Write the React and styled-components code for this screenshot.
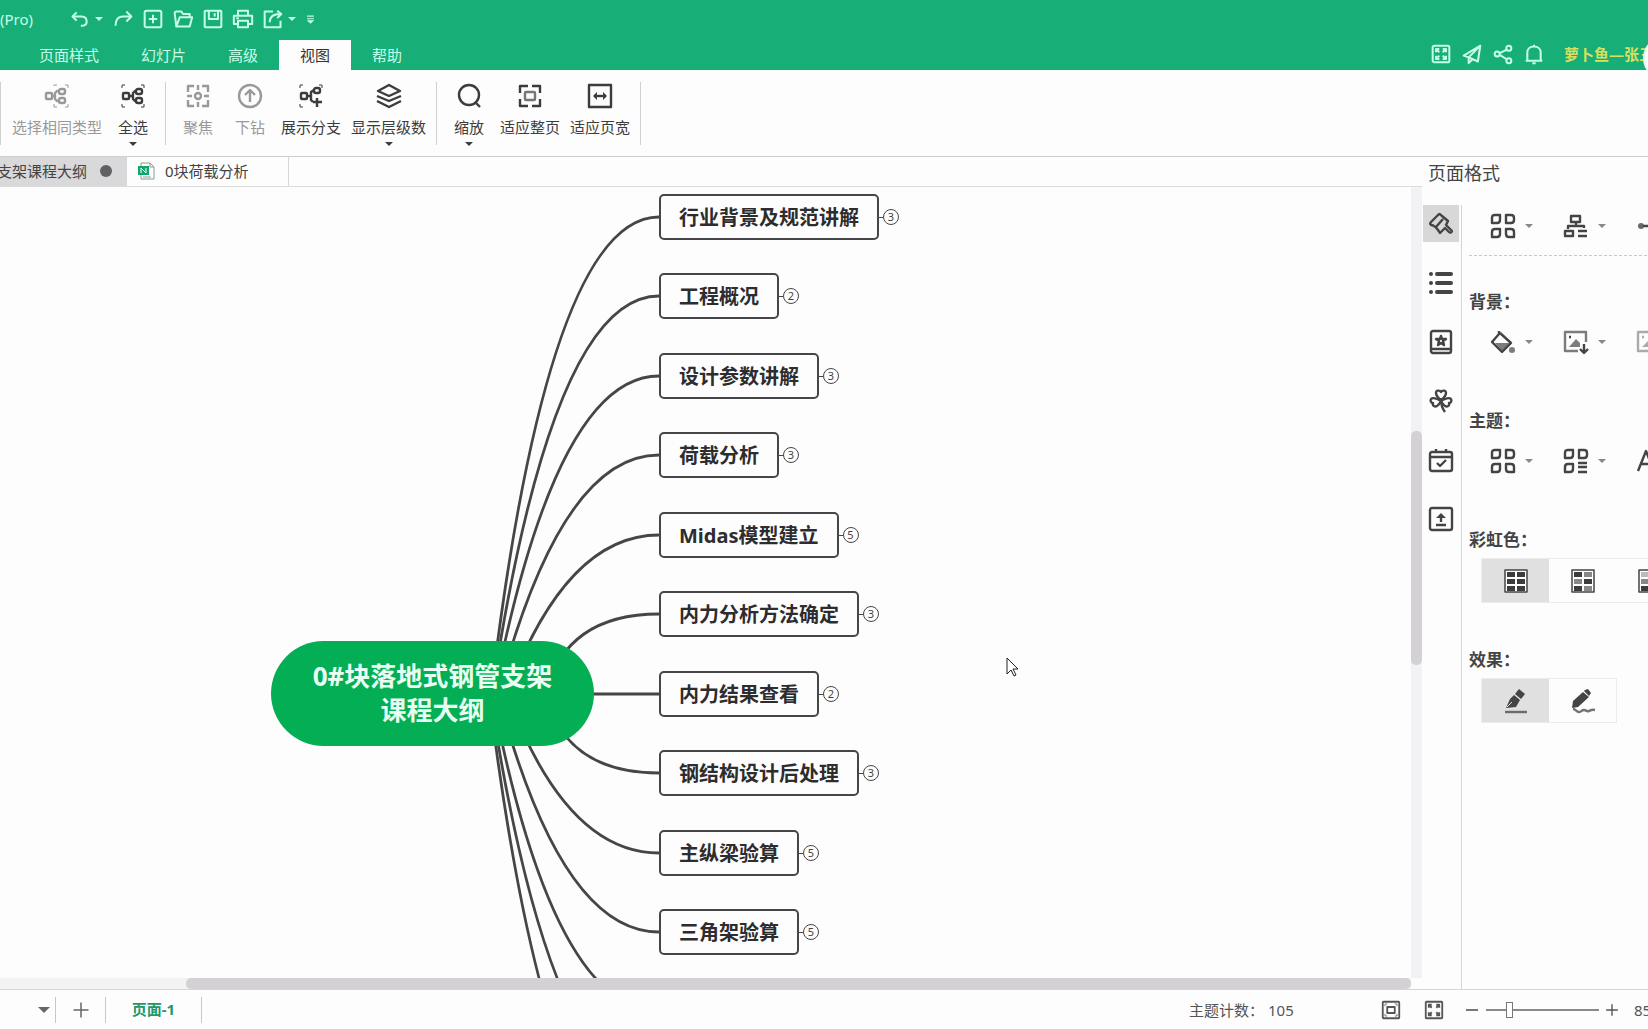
import { useState } from "react";
import styled, { createGlobalStyle, css } from "styled-components";

const GlobalStyle = createGlobalStyle`
  * {
    box-sizing: border-box;
  }

  body {
    margin: 0;
    overflow: hidden;
    font-family: "Noto Sans", "Noto Sans CJK SC", sans-serif;
    font-size: 15px;
    line-height: 20px;
    color: #444;
    background: #fdfdfd;
  }

  button {
    padding: 0;
    border: 0;
    background: none;
    color: inherit;
    font: inherit;
    cursor: pointer;
  }
`;

const icons = {
  undo: (
    <>
      <path d="M8 4 3 9l5 5" />
      <path d="M3 9h11c4 0 6 2 6 6s-2 5-5 5h-2" />
    </>
  ),
  redo: (
    <>
      <path d="m16 3 6 6-6 6" />
      <path d="M21 9h-9c-6 0-9 4-9 11" />
    </>
  ),
  newFile: (
    <>
      <rect x="2" y="2" width="20" height="20" rx="2" />
      <path d="M12 7v10M7 12h10" />
    </>
  ),
  folder: (
    <>
      <path d="M4 21 2 5c0-1 1-2 2-2h6l2 3h8v4" />
      <path d="M4 21h16l3-11H8L4 21Z" />
    </>
  ),
  save: (
    <>
      <rect x="2" y="2" width="20" height="20" rx="1" />
      <path d="M7 2v10h11V2M14 5v4" />
    </>
  ),
  print: (
    <>
      <path d="M6 7V2h12v5M6 18H1V8h22v10h-5" />
      <path d="M6 14h12v8H6zM4 11h3" />
    </>
  ),
  exportFile: (
    <>
      <path d="M12 3H2v19h19v-8" />
      <path d="M8 16c0-6 4-10 13-10M17 2l5 4-5 5" />
    </>
  ),
  more: (
    <>
      <path d="M3 3h18M3 10h18" strokeWidth="3" />
      <path d="M2 14h20l-10 9z" fill="currentColor" stroke="none" />
    </>
  ),
  fullscreen: (
    <>
      <rect x="2" y="2" width="20" height="20" rx="2" />
      <path d="M6 10V6h4M14 6h4v4M18 14v4h-4M10 18H6v-4M6 6l4 4M18 6l-4 4M18 18l-4-4M6 18l4-4" />
    </>
  ),
  plane: <path d="M22 2 2 14l6 2 11 5 3-19ZM22 2 8 16v7l5-5" />,
  share: (
    <>
      <circle cx="5" cy="12" r="3" />
      <circle cx="19" cy="5" r="3" />
      <circle cx="19" cy="20" r="3" />
      <path d="m8 11 8-4M8 13l8 5" />
    </>
  ),
  bell: <path d="M4 20V10c0-4 3-7 8-7s8 3 8 7v10M2 20h20M12 1v2M10 23h4" />,
  sameType: (
    <>
      <rect x="1" y="9" width="6" height="6" rx="1" />
      <rect x="14" y="5" width="6" height="5" rx="2" />
      <rect x="14" y="14" width="6" height="5" rx="2" />
      <path d="M7 12h3M14 7h-2l-2 2v6l2 2h2" />
      <path d="M9 2V1h3M20 1h3v3M23 20v3h-3M12 23H9v-3" strokeWidth="1" />
    </>
  ),
  selectAll: (
    <>
      <rect x="2" y="9" width="6" height="6" rx="1" />
      <rect x="15" y="5" width="6" height="5" rx="2" />
      <rect x="15" y="14" width="6" height="5" rx="2" />
      <path d="M8 12h4M15 7h-1l-2 2v6l2 2h1" />
      <path d="M1 4V1h3M20 1h3v3M23 20v3h-3M4 23H1v-3" strokeWidth="1" />
    </>
  ),
  focus: (
    <>
      <circle cx="12" cy="12" r="3" />
      <path d="M2 8V2h6M16 2h6v6M22 16v6h-6M8 22H2v-6M12 1v5M12 18v5M1 12h5M18 12h5" />
    </>
  ),
  drill: (
    <>
      <circle cx="12" cy="12" r="11" />
      <path d="M12 18V7M7 11l5-5 5 5" />
    </>
  ),
  branch: (
    <>
      <rect x="2" y="9" width="6" height="6" rx="1" />
      <rect x="15" y="4" width="6" height="5" rx="2" />
      <path d="M8 12h4M15 6l-3 2v8l2 2M18 14v9M14 18h9" />
      <path d="M1 4V1h3M20 1h3v3M4 23H1v-3" strokeWidth="1" />
    </>
  ),
  layers: <path d="m12 1 11 6-11 5L1 7l11-6ZM0 12l12 5 12-5M0 17l12 6 12-6" />,
  zoom: (
    <>
      <circle cx="12" cy="11" r="10" />
      <path d="m18 18 5 5" />
    </>
  ),
  fitPage: (
    <>
      <path d="M2 9V2h8M14 2h8v7M22 15v7h-8M10 22H2v-7" />
      <rect x="7" y="8" width="10" height="8" rx="1" opacity=".7" />
    </>
  ),
  fitWidth: (
    <>
      <rect x="1" y="1" width="22" height="22" />
      <path d="M6 12h12" />
      <path d="m9 8-4 4 4 4ZM15 8l4 4-4 4Z" fill="currentColor" strokeWidth="0" />
    </>
  ),
  brush: (
    <>
      <path d="M10 2 2 10c-1 1-1 2 0 3 3 0 6 3 9 8l5-5 4 4c2 2 4-1 2-2l-5-5 2-4L13 4c-1-1-2-2-3-2Z" />
      <path d="m14 7-7 8" />
    </>
  ),
  list: (
    <>
      <path d="M8 3h14M8 12h14M8 21h14" strokeWidth="4" strokeLinecap="round" />
      <path d="M2 3h0M2 12h0M2 21h0" strokeWidth="4" strokeLinecap="round" />
    </>
  ),
  book: (
    <>
      <rect x="2" y="1" width="20" height="22" rx="2" />
      <path d="M2 19h20M12 6l1 3h4l-3 2 1 4-3-2-3 2 1-4-3-2h4z" />
    </>
  ),
  clover: (
    <>
      <path d="M12 11C8 8 7 6 7 4c0-3 4-3 5-1 1-2 5-2 5 1 0 2-1 4-5 7Z" />
      <path d="M12 12C7 9 4 8 2 10c-1 2 0 4 2 4-1 3 2 4 4 3 2-1 3-3 4-5Z" />
      <path d="M12 12c5-3 8-4 10-2 1 2 0 4-2 4 1 3-2 4-4 3-2-1-3-3-4-5Z" />
      <path d="M12 11c0 4 1 8 4 12" />
    </>
  ),
  calendar: (
    <>
      <rect x="1" y="4" width="22" height="19" rx="2" />
      <path d="M1 9h22M7 1v4M17 1v4M8 15l3 3 6-6" />
    </>
  ),
  upload: (
    <>
      <rect x="1" y="1" width="22" height="22" rx="2" />
      <path d="M12 15V9M7 18h10" />
      <path d="M7 11h10l-5-5z" fill="currentColor" stroke="none" />
    </>
  ),
  blocks: (
    <>
      <path d="M1 4q0-3 3-3h5v5q0 3-3 3H1ZM15 1h5q3 0 3 3v2q0 3-3 3h-5Z" />
      <path d="M4 15h5v5q0 3-3 3H1v-5q0-3 3-3ZM15 15h5q3 0 3 3v5h-5q-3 0-3-3Z" />
    </>
  ),
  structure: (
    <>
      <rect x="7" y="2" width="9" height="6" />
      <path d="M12 8v4M4 15v-3h16v2" />
      <rect x="1" y="17" width="8" height="5" />
      <path d="M14 17h9M14 22h9" />
    </>
  ),
  connector: (
    <>
      <circle cx="4" cy="12" r="3" fill="currentColor" stroke="none" opacity=".8" />
      <path d="M6 12h16M13 7v10" />
    </>
  ),
  fill: (
    <>
      <path d="M8 1v3L1 12l10 10 9-9L9 3" />
      <path d="M4 13h15l-8 8z" fill="currentColor" stroke="none" opacity=".7" />
      <circle cx="21" cy="20" r="3" fill="currentColor" stroke="none" opacity=".7" />
    </>
  ),
  image: (
    <>
      <path d="M14 21H1V2h21v10" opacity=".7" />
      <path d="M5 17 12 9l4 4v4z" fill="currentColor" stroke="none" opacity=".7" />
      <path d="M5 7h2" />
      <path d="M20 14v9M16 19l4 4 4-4" />
    </>
  ),
  watermark: (
    <>
      <path d="M22 21H1V2h21" />
      <path d="m5 17 8-8 5 8z" fill="currentColor" stroke="none" />
      <path d="M5 7h2" />
    </>
  ),
  themes: (
    <>
      <path d="M1 4q0-3 3-3h5v5q0 3-3 3H1ZM15 1h5q3 0 3 3v2q0 3-3 3h-5Z" />
      <path d="M4 15h5v5q0 3-3 3H1v-5q0-3 3-3ZM14 14h9M14 18h9M14 23h9" />
    </>
  ),
  letter: <path d="m1 22 8-20 8 20M4 15h10" />,
  fitWindow: (
    <>
      <rect x="1" y="1" width="22" height="22" rx="1" />
      <rect x="7" y="8" width="10" height="8" />
      <path d="M4 7V4h3M17 4h3v3M20 17v3h-3M7 20H4v-3" strokeWidth="1" />
    </>
  ),
  expand: (
    <>
      <rect x="1" y="1" width="22" height="22" rx="1" />
      <path d="M5 9V5h4M15 5h4v4M19 15v4h-4M9 19H5v-4M5 5l4 4M19 5l-4 4M19 19l-4-4M5 19l4-4" />
    </>
  ),
  minus: <path d="M3 12h18" />,
  plus: <path d="M12 2v20M2 12h20" />,
  pen: (
    <>
      <path d="m15 0 6 5-4 5-6-5Z" fill="currentColor" stroke="none" />
      <path d="m10 6 6 5-4 7-10 1 4-9Z" fill="currentColor" stroke="none" />
      <path d="m3 18 5-5" stroke="#e0e0e1" strokeWidth="1" />
      <path d="M1 23h22" opacity=".75" />
    </>
  ),
  pencil: (
    <>
      <path d="m14 1 3-1 3 4-2 3-5-5ZM12 3l6 5L7 18l-6 1 1-7Z" fill="currentColor" stroke="none" />
      <path d="M2 20c3 0 3 3 6 3s2-2 5-2 2 2 5 1 2-2 6-1" opacity=".75" />
    </>
  ),
};

function Icon({ name, size = 24, weight = 2.4 }) {
  return (
    <Glyph viewBox="0 0 24 24" width={size} height={size} strokeWidth={weight} aria-hidden="true">
      {icons[name]}
    </Glyph>
  );
}

// three rows of two colour cells, 1 = dark, 2 = mid, 3 = light
function PaletteIcon({ cells }) {
  const shades = { 1: "#3c3c3c", 2: "#888", 3: "#bbb" };
  return (
    <Glyph viewBox="0 0 24 24" width={24} height={24} aria-hidden="true">
      <rect x="1" y="1" width="22" height="22" strokeWidth="1.5" fill="#fff" />
      {cells.map((cell, i) => (
        <rect
          key={i}
          x={i % 2 ? 13 : 3}
          y={3 + Math.floor(i / 2) * 7}
          width="8"
          height="5"
          fill={shades[cell]}
          stroke="none"
        />
      ))}
    </Glyph>
  );
}

function FileIcon() {
  return (
    <Glyph viewBox="0 0 18 18" width={18} height={18} aria-hidden="true">
      <path d="M3 1h9l4 4v12H3z" fill="#fff" stroke="#8a9a94" />
      <path d="M12 1v4h4M5 15h8" stroke="#8a9a94" />
      <rect x="0" y="4" width="11" height="9" fill="#14a56c" stroke="none" />
      <path d="M3 11V6l5 5V6" stroke="#fff" strokeWidth="1" />
    </Glyph>
  );
}

const tabs = ["页面样式", "幻灯片", "高级", "视图", "帮助"];

const ribbonGroups = [
  [
    { icon: "sameType", label: "选择相同类型", disabled: true },
    { icon: "selectAll", label: "全选", menu: true },
  ],
  [
    { icon: "focus", label: "聚焦", disabled: true },
    { icon: "drill", label: "下钻", disabled: true },
    { icon: "branch", label: "展示分支" },
    { icon: "layers", label: "显示层级数", menu: true },
  ],
  [
    { icon: "zoom", label: "缩放", menu: true },
    { icon: "fitPage", label: "适应整页" },
    { icon: "fitWidth", label: "适应页宽" },
  ],
];

const sideTools = [
  { icon: "brush", label: "页面格式" },
  { icon: "list", label: "大纲" },
  { icon: "book", label: "图标" },
  { icon: "clover", label: "剪贴画" },
  { icon: "calendar", label: "任务" },
  { icon: "upload", label: "导出" },
];

// bend = x of the curve's control point, start = x where it leaves the root
const topics = [
  { label: "行业背景及规范讲解", count: 3, y: 30, start: 491, bend: 548 },
  { label: "工程概况", count: 2, y: 109, start: 492, bend: 552 },
  { label: "设计参数讲解", count: 3, y: 189, start: 494, bend: 556 },
  { label: "荷载分析", count: 3, y: 268, start: 498, bend: 561 },
  { label: "Midas模型建立", count: 5, y: 348, start: 507, bend: 566 },
  { label: "内力分析方法确定", count: 3, y: 427, start: 545, bend: 566 },
  { label: "内力结果查看", count: 2, y: 507, start: 541, bend: 567 },
  { label: "钢结构设计后处理", count: 3, y: 586, start: 545, bend: 566 },
  { label: "主纵梁验算", count: 5, y: 666, start: 507, bend: 566 },
  { label: "三角架验算", count: 5, y: 745, start: 498, bend: 561 },
];

const hiddenBranches = [
  { y: 824, start: 492, bend: 553 },
  { y: 904, start: 490, bend: 551 },
  { y: 983, start: 489, bend: 548 },
];

const ROOT_Y = 507;
const TOPIC_X = 659;

function MindMap() {
  return (
    <Canvas>
      <Branches>
        {[...topics, ...hiddenBranches].map(({ y, start, bend }) => (
          <path key={y} d={`M${start} ${ROOT_Y}Q${bend} ${y} ${TOPIC_X} ${y}`} />
        ))}
      </Branches>
      <RootTopic>
        0#块落地式钢管支架
        <br />
        课程大纲
      </RootTopic>
      {topics.map(({ label, count, y }) => (
        <TopicRow key={label} $y={y}>
          <Topic>{label}</Topic>
          <Link />
          <Count>{count}</Count>
        </TopicRow>
      ))}
      <Pointer viewBox="0 0 12 20" width="12" height="20">
        <path d="M1 1v16l4-4 3 6 2-1-3-6h5z" />
      </Pointer>
    </Canvas>
  );
}

function ToolPair({ icon, label, muted, noMenu }) {
  return (
    <PanelTool aria-label={label} $muted={muted}>
      <Icon name={icon} />
      {!noMenu && <Caret $size={4} $color="#888" />}
    </PanelTool>
  );
}

export default function App() {
  const [activeTab, setActiveTab] = useState("视图");
  const [activeTool, setActiveTool] = useState("brush");
  const [zoom, setZoom] = useState(85);

  return (
    <Page>
      <GlobalStyle />
      <Header>
        <TitleBar>
          <AppName>(Pro)</AppName>
          <QuickTools>
            <QuickButton aria-label="撤销">
              <Icon name="undo" size={20} />
              <Caret $size={4} />
            </QuickButton>
            <QuickButton aria-label="重做"><Icon name="redo" size={20} /></QuickButton>
            <QuickButton aria-label="新建"><Icon name="newFile" size={20} /></QuickButton>
            <QuickButton aria-label="打开"><Icon name="folder" size={20} /></QuickButton>
            <QuickButton aria-label="保存"><Icon name="save" size={20} /></QuickButton>
            <QuickButton aria-label="打印"><Icon name="print" size={20} /></QuickButton>
            <QuickButton aria-label="导出">
              <Icon name="exportFile" size={20} />
              <Caret $size={4} />
            </QuickButton>
            <QuickButton aria-label="更多"><Icon name="more" size={9} /></QuickButton>
          </QuickTools>
        </TitleBar>
        <MenuBar>
          <Tabs>
            {tabs.map((tab) => (
              <Tab key={tab} $active={tab === activeTab} onClick={() => setActiveTab(tab)}>
                {tab}
              </Tab>
            ))}
          </Tabs>
          <Account>
            <QuickButton aria-label="全屏"><Icon name="fullscreen" size={20} /></QuickButton>
            <QuickButton aria-label="发送"><Icon name="plane" size={20} /></QuickButton>
            <QuickButton aria-label="分享"><Icon name="share" size={20} /></QuickButton>
            <QuickButton aria-label="通知"><Icon name="bell" size={20} /></QuickButton>
            <UserName>萝卜鱼—张三</UserName>
          </Account>
          <Avatar />
        </MenuBar>
      </Header>

      <Ribbon>
        {ribbonGroups.map((group, i) => (
          <RibbonGroup key={i}>
            {group.map(({ icon, label, disabled, menu }) => (
              <RibbonButton key={label} disabled={disabled}>
                <Icon name={icon} />
                <span>{label}</span>
                {menu && <Caret $size={4} />}
              </RibbonButton>
            ))}
          </RibbonGroup>
        ))}
      </Ribbon>

      <Main>
        <Workspace>
          <DocTabs>
            <DocTab $current>
              支架课程大纲
              <Dot />
            </DocTab>
            <DocTab>
              <FileIcon />
              0块荷载分析
            </DocTab>
          </DocTabs>
          <Editor>
            <MindMap />
            <VerticalTrack>
              <VerticalThumb />
            </VerticalTrack>
          </Editor>
          <HorizontalTrack>
            <HorizontalThumb />
          </HorizontalTrack>
        </Workspace>

        <SidePanel>
          <PanelTitle>页面格式</PanelTitle>
          <PanelBody>
            <SideTools>
              {sideTools.map(({ icon, label }) => (
                <SideButton
                  key={icon}
                  aria-label={label}
                  $active={icon === activeTool}
                  onClick={() => setActiveTool(icon)}
                >
                  <Icon name={icon} />
                </SideButton>
              ))}
            </SideTools>
            <Options>
              <ToolRow $first>
                <ToolPair icon="blocks" label="布局" />
                <ToolPair icon="structure" label="结构" />
                <ToolPair icon="connector" label="间距" />
              </ToolRow>
              <Section>
                <SectionTitle>背景：</SectionTitle>
                <ToolRow>
                  <ToolPair icon="fill" label="背景颜色" />
                  <ToolPair icon="image" label="背景图片" />
                  <ToolPair icon="watermark" label="水印" muted noMenu />
                </ToolRow>
              </Section>
              <Section>
                <SectionTitle>主题：</SectionTitle>
                <ToolRow>
                  <ToolPair icon="blocks" label="主题" />
                  <ToolPair icon="themes" label="主题颜色" />
                  <ToolPair icon="letter" label="主题字体" noMenu />
                </ToolRow>
              </Section>
              <Section>
                <SectionTitle>彩虹色：</SectionTitle>
                <Segments>
                  <Segment $active aria-label="单色"><PaletteIcon cells={[1, 1, 1, 1, 1, 1]} /></Segment>
                  <Segment aria-label="彩虹色一"><PaletteIcon cells={[1, 2, 2, 1, 1, 2]} /></Segment>
                  <Segment aria-label="彩虹色二"><PaletteIcon cells={[3, 3, 2, 2, 1, 1]} /></Segment>
                </Segments>
              </Section>
              <Section>
                <SectionTitle>效果：</SectionTitle>
                <Segments>
                  <Segment $active aria-label="常规"><Icon name="pen" /></Segment>
                  <Segment aria-label="手绘"><Icon name="pencil" /></Segment>
                </Segments>
              </Section>
            </Options>
          </PanelBody>
        </SidePanel>
      </Main>

      <StatusBar>
        <PageMenu aria-label="页面列表"><Caret $size={6} $color="#666" /></PageMenu>
        <AddPage aria-label="新建页面"><Icon name="plus" size={18} weight={2} /></AddPage>
        <PageTab>页面-1</PageTab>
        <StatusTools>
          <TopicCount>主题计数：<span>105</span></TopicCount>
          <StatusButton aria-label="适应窗口"><Icon name="fitWindow" size={18} /></StatusButton>
          <StatusButton aria-label="全屏"><Icon name="expand" size={18} /></StatusButton>
          <ZoomTools>
            <button aria-label="缩小"><Icon name="minus" size={16} /></button>
            <ZoomSlider
              type="range"
              aria-label="缩放比例"
              min="10"
              max="400"
              value={zoom}
              onChange={(e) => setZoom(Number(e.target.value))}
            />
            <button aria-label="放大"><Icon name="plus" size={14} /></button>
          </ZoomTools>
          <ZoomValue>{zoom}%</ZoomValue>
        </StatusTools>
      </StatusBar>
    </Page>
  );
}

const Glyph = styled.svg`
  display: block;
  flex: none;
  overflow: visible;
  fill: none;
  stroke: currentColor;
  stroke-linejoin: round;
`;

const Caret = styled.i`
  flex: none;
  border: ${(props) => props.$size}px solid transparent;
  border-top-color: ${(props) => props.$color || "currentColor"};
  border-bottom: 0;
`;

const Page = styled.div`
  display: flex;
  flex-direction: column;
  height: 100vh;
  overflow: hidden;
`;

const Header = styled.header`
  flex: none;
  background: #18ae78;
  color: #c5ffe8;
`;

const TitleBar = styled.div`
  display: flex;
  align-items: center;
  height: 38px;
`;

const AppName = styled.span`
  width: 70px;
`;

const QuickTools = styled.div`
  display: flex;
  gap: 10px;
`;

const QuickButton = styled.button`
  display: flex;
  align-items: center;
  gap: 5px;
`;

const MenuBar = styled.div`
  position: relative;
  display: flex;
  justify-content: space-between;
  height: 32px;
`;

const Tabs = styled.nav`
  display: flex;
  align-items: flex-end;
  padding-left: 18px;
`;

const Tab = styled.button`
  height: 30px;
  padding: 0 21px;
  ${(props) =>
    props.$active &&
    css`
      color: #333;
      background: #fdfdfd;
    `}
`;

const Account = styled.div`
  display: flex;
  align-items: center;
  gap: 11px;
`;

const UserName = styled.span`
  width: 93px;
  padding-left: 9px;
  overflow: hidden;
  white-space: nowrap;
  color: #d8df5e;
  font-weight: 700;
`;

const Avatar = styled.div`
  position: absolute;
  top: -2px;
  right: -39px;
  width: 44px;
  height: 44px;
  border: 2px solid #dffaf5;
  border-radius: 50%;
  background: #fff;
`;

const Ribbon = styled.div`
  display: flex;
  flex: none;
  align-items: center;
  height: 87px;
  border-bottom: 1px solid #cfcfcf;
`;

const RibbonGroup = styled.div`
  display: flex;
  height: 63px;
  padding: 0 5px 0 6px;
  border-right: 1px solid #d0d0d0;
  &:first-child {
    padding-right: 6px;
    border-left: 1px solid #d0d0d0;
  }
`;

const RibbonButton = styled.button`
  display: flex;
  flex-direction: column;
  align-items: center;
  min-width: 52px;
  padding: 2px 5px 0;
  white-space: nowrap;
  color: #3c3c3c;
  span {
    margin: 9px 0 5px;
  }
  &:disabled {
    color: #999;
  }
`;

const Main = styled.main`
  display: flex;
  flex: 1;
  min-height: 0;
`;

const Workspace = styled.div`
  display: flex;
  flex: 1;
  flex-direction: column;
  min-width: 0;
`;

const DocTabs = styled.div`
  display: flex;
  flex: none;
  height: 30px;
  border-bottom: 1px solid #dcdcdc;
`;

const DocTab = styled.button`
  display: flex;
  align-items: center;
  gap: 9px;
  width: 162px;
  padding: 0 0 2px 11px;
  border-right: 1px solid #d8d8d8;
  white-space: nowrap;
  ${(props) =>
    props.$current &&
    css`
      justify-content: flex-end;
      gap: 13px;
      width: 127px;
      padding: 0 14px 2px 0;
      overflow: hidden;
      background: #d9d8da;
    `}
`;

const Dot = styled.i`
  flex: none;
  width: 12px;
  height: 12px;
  border-radius: 50%;
  background: #626063;
`;

const Editor = styled.div`
  display: flex;
  flex: 1;
  min-height: 0;
`;

const Canvas = styled.div`
  position: relative;
  flex: 1;
  overflow: hidden;
`;

const Branches = styled.svg`
  position: absolute;
  inset: 0;
  width: 100%;
  height: 100%;
  fill: none;
  stroke: #464547;
  stroke-width: 2.8px;
`;

const RootTopic = styled.div`
  position: absolute;
  top: 454px;
  left: 271px;
  width: 323px;
  padding: 18px 0 19px;
  border-radius: 53px;
  background: #04ae55;
  color: #e9fff3;
  font-size: 26px;
  font-weight: 700;
  line-height: 34px;
  text-align: center;
`;

const TopicRow = styled.div`
  position: absolute;
  top: ${(props) => props.$y - 23}px;
  left: ${TOPIC_X}px;
  display: flex;
  align-items: center;
`;

const Topic = styled.div`
  height: 46px;
  padding: 0 18px;
  border: 2px solid #464547;
  border-radius: 5px;
  background: #fdfdfd;
  color: #2d2c2e;
  font-size: 20px;
  font-weight: 700;
  line-height: 44px;
  white-space: nowrap;
`;

const Link = styled.i`
  width: 4px;
  height: 1px;
  background: #464547;
`;

const Count = styled.button`
  width: 16px;
  height: 16px;
  border: 1px solid #464547;
  border-radius: 50%;
  font-size: 11px;
  line-height: 14px;
`;

const Pointer = styled.svg`
  position: absolute;
  top: 470px;
  left: 1006px;
  fill: #fff;
  stroke: #222;
`;

const VerticalTrack = styled.div`
  width: 11px;
  padding-top: 244px;
  background: #f2f2f6;
`;

const VerticalThumb = styled.div`
  height: 234px;
  border-radius: 5px;
  background: #d3d1d4;
`;

const HorizontalTrack = styled.div`
  flex: none;
  height: 11px;
  margin-right: 11px;
  padding-left: 186px;
  background: #f3f3f4;
`;

const HorizontalThumb = styled.div`
  height: 11px;
  border-radius: 5px;
  background: #d3d1d4;
`;

const SidePanel = styled.aside`
  display: flex;
  flex: none;
  flex-direction: column;
  width: 226px;
  overflow: hidden;
`;

const PanelTitle = styled.h2`
  margin: 0;
  padding: 4px 6px 20px;
  font-size: 18px;
  font-weight: 400;
  line-height: 24px;
`;

const PanelBody = styled.div`
  display: flex;
  flex: 1;
`;

const SideTools = styled.div`
  display: flex;
  flex: none;
  flex-direction: column;
  gap: 22px;
  width: 40px;
  padding-left: 1px;
  border-right: 1px solid #d4d4d4;
`;

const SideButton = styled.button`
  display: grid;
  place-items: center;
  width: 36px;
  height: 37px;
  background: ${(props) => (props.$active ? "#d8d8d9" : "none")};
`;

const Options = styled.div`
  flex: none;
  width: 240px;
  padding-left: 7px;
`;

const ToolRow = styled.div`
  display: flex;
  gap: 31px;
  height: 44px;
  padding-left: 22px;
  ${(props) =>
    props.$first &&
    css`
      height: 51px;
      padding-bottom: 8px;
      border-bottom: 1px dashed #c9c9c9;
    `}
`;

const PanelTool = styled.button`
  display: flex;
  align-items: center;
  gap: 10px;
  color: ${(props) => (props.$muted ? "#aaa" : "#444")};
`;

const Section = styled.section`
  padding-top: 34px;
  & + & {
    padding-top: 45px;
  }
`;

const SectionTitle = styled.h3`
  margin: 0 0 6px;
  font-size: 17px;
  font-weight: 700;
  line-height: 24px;
`;

const Segments = styled.div`
  display: flex;
  width: max-content;
  margin-left: 12px;
  border: 1px solid #ececec;
`;

const Segment = styled.button`
  display: grid;
  place-items: center;
  width: 67px;
  height: 43px;
  background: ${(props) => (props.$active ? "#e0e0e1" : "none")};
`;

const StatusBar = styled.footer`
  display: flex;
  flex: none;
  align-items: center;
  height: 41px;
  border: solid #d6d6d6;
  border-width: 1px 0;
`;

const PageMenu = styled.button`
  display: flex;
  justify-content: flex-end;
  align-items: center;
  width: 56px;
  height: 26px;
  padding-right: 5px;
  border-right: 1px solid #c8c8c8;
`;

const AddPage = styled.button`
  display: grid;
  place-items: center;
  width: 50px;
  height: 26px;
  border-right: 1px solid #c8c8c8;
  color: #666;
`;

const PageTab = styled.button`
  width: 96px;
  height: 26px;
  padding-bottom: 2px;
  border-right: 1px solid #c8c8c8;
  color: #23976a;
  font-weight: 700;
`;

const StatusTools = styled.div`
  display: flex;
  align-items: center;
  width: 459px;
  margin-left: auto;
  overflow: hidden;
  color: #555;
`;

const TopicCount = styled.div`
  flex: none;
  width: 193px;
  span {
    margin-left: 4px;
  }
`;

const StatusButton = styled.button`
  flex: none;
  margin-right: 25px;
`;

const ZoomTools = styled.div`
  display: flex;
  flex: none;
  align-items: center;
  gap: 6px;
  margin-left: -4px;
`;

const ZoomSlider = styled.input`
  width: 113px;
  height: 16px;
  margin: 0;
  appearance: none;
  background: linear-gradient(#8a8a8a, #8a8a8a) center / 100% 2px no-repeat;

  &::-webkit-slider-thumb {
    appearance: none;
    width: 7px;
    height: 16px;
    border: 1px solid #777;
    background: #fff;
  }
`;

const ZoomValue = styled.span`
  flex: none;
  margin-left: 15px;
`;
